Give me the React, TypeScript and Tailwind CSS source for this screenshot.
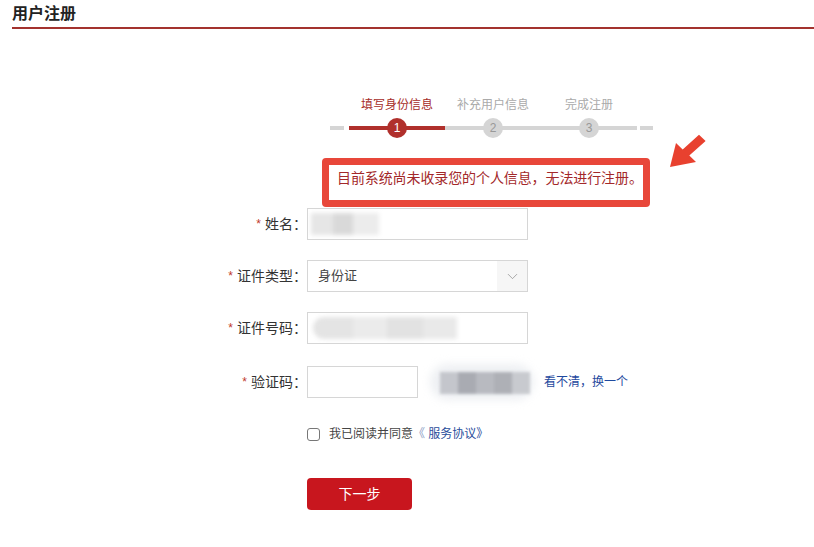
import React, { useState } from 'react';
import { ChevronDown } from 'lucide-react';

const font = { fontFamily: '"Liberation Sans", "Noto Sans CJK SC", sans-serif' };

const steps = [
  { n: 1, label: '填写身份信息', active: true },
  { n: 2, label: '补充用户信息', active: false },
  { n: 3, label: '完成注册', active: false },
];

const FieldLabel = ({ text }: { text: string }) => (
  <div className="w-[295px] shrink-0 flex items-center justify-end text-[14px] text-[#333]">
    <span className="text-[#c0392b] text-[12px] mr-[4px]">*</span>
    {text}：
  </div>
);

export default function App() {
  const [agree, setAgree] = useState(false);

  return (
    <div className="relative w-[814px] h-[547px] bg-white px-[12px] overflow-hidden" style={font}>
      {/* header */}
      <div className="pt-[4px] pb-[4px] border-b-2 border-[#a3322e] -mr-[12px]">
        <h1 className="text-[16px] leading-[19px] font-bold text-[#222]">用户注册</h1>
      </div>

      {/* stepper */}
      <div className="mt-[68px] ml-[318px] flex items-end">
        <div className="w-[14px] h-[4px] bg-[#d5d5d5] mb-[8px]" />
        <div className="ml-[5px] flex">
          {steps.map((s) => (
            <div key={s.n} className="w-[96px] flex flex-col items-center">
              <span
                className={`text-[12px] leading-[16px] ${s.active ? 'text-[#a62c28]' : 'text-[#aaa]'}`}
              >
                {s.label}
              </span>
              <div className="relative mt-[5px] h-[20px] w-full flex items-center justify-center">
                <div
                  className={`absolute inset-x-0 top-[8px] h-[4px] ${s.active ? 'bg-[#b0302c]' : 'bg-[#d5d5d5]'}`}
                />
                <div
                  className={`relative w-[20px] h-[20px] rounded-full flex items-center justify-center text-[12px] ${
                    s.active ? 'bg-[#b0302c] text-white' : 'bg-[#d5d5d5] text-[#999]'
                  }`}
                >
                  {s.n}
                </div>
              </div>
            </div>
          ))}
        </div>
        <div className="ml-[3px] w-[13px] h-[4px] bg-[#d5d5d5] mb-[8px]" />
      </div>

      {/* notice */}
      <div className="mt-[20px] ml-[310px] w-[328px] border-[7px] border-[#e8473a] rounded-[4px] bg-white pt-[3px] pb-[11px] pl-[8px]">
        <p className="text-[14px] leading-[21px] text-[#a3282a] tracking-[-0.1px] whitespace-nowrap">
          目前系统尚未收录您的个人信息，无法进行注册。
        </p>
      </div>

      {/* annotation arrow */}
      <svg className="absolute left-[664px] top-[134px]" width="46" height="36" viewBox="0 0 46 36">
        <polygon
          points="6,33 32,28 25.3,21.6 41.6,6.9 35,0.7 18.7,15.4 12,9"
          fill="#e8412f"
        />
      </svg>

      {/* form */}
      <div className="flex flex-col gap-[20px] mt-[1px]">
        <div className="flex items-center">
          <FieldLabel text="姓名" />
          <div className="relative w-[221px] h-[32px] border border-[#d6d6d6] bg-white overflow-hidden">
            <div className="absolute left-[3px] top-[4px] flex blur-[2px]">
              <div className="w-[22px] h-[22px] bg-[#e6e6e6]" />
              <div className="w-[20px] h-[22px] bg-[#d9d9d9]" />
              <div className="w-[26px] h-[22px] bg-[#ececec]" />
            </div>
          </div>
        </div>

        <div className="flex items-center">
          <FieldLabel text="证件类型" />
          <div className="w-[221px] h-[32px] border border-[#d6d6d6] bg-white flex items-center">
            <span className="flex-1 pl-[10px] text-[13px] text-[#444]">身份证</span>
            <div className="w-[30px] h-full bg-[#f6f6f6] flex items-center justify-center">
              <ChevronDown size={17} strokeWidth={1} color="#888" />
            </div>
          </div>
        </div>

        <div className="flex items-center">
          <FieldLabel text="证件号码" />
          <div className="relative w-[221px] h-[32px] border border-[#d6d6d6] bg-white overflow-hidden">
            <div className="absolute left-[5px] top-[4px] flex blur-[2px]">
              <div className="w-[40px] h-[22px] bg-[#e4e4e4] rounded-l-full" />
              <div className="w-[34px] h-[22px] bg-[#ebebeb]" />
              <div className="w-[36px] h-[22px] bg-[#e2e2e2]" />
              <div className="w-[34px] h-[22px] bg-[#e9e9e9]" />
            </div>
          </div>
        </div>

        <div className="flex items-center">
          <FieldLabel text="验证码" />
          <div className="w-[111px] h-[32px] border border-[#d6d6d6] bg-white" />
          <div className="relative ml-[12px] w-[104px] h-[36px]">
            <div className="absolute inset-0 bg-[#eef0f3] rounded-full blur-[4px]" />
            <div className="absolute left-[10px] top-[8px] flex blur-[1.5px]">
              <div className="w-[18px] h-[22px] bg-[#c4c6cc]" />
              <div className="w-[18px] h-[22px] bg-[#a9abb2]" />
              <div className="w-[18px] h-[22px] bg-[#b8bac0]" />
              <div className="w-[18px] h-[22px] bg-[#aeb0b6]" />
              <div className="w-[18px] h-[22px] bg-[#c8cacf]" />
            </div>
          </div>
          <a className="ml-[10px] text-[12px] text-[#1f4a9e] cursor-pointer">看不清，换一个</a>
        </div>
      </div>

      {/* agreement */}
      <label className="mt-[25px] ml-[295px] flex items-center h-[18px] cursor-pointer">
        <input
          type="checkbox"
          checked={agree}
          onChange={(e) => setAgree(e.target.checked)}
          className="appearance-none w-[13px] h-[13px] border border-[#777] rounded-[3px] bg-white"
        />
        <span className="ml-[9px] text-[12px] text-[#444]">我已阅读并同意</span>
        <span className="text-[12px] text-[#8a9cc4] whitespace-pre">《 </span>
        <span className="text-[12px] text-[#2a4d9b]">服务协议》</span>
      </label>

      {/* submit */}
      <button className="mt-[35px] ml-[295px] w-[105px] h-[32px] rounded-[4px] bg-[#c8161e] text-white text-[14px]">
        下一步
      </button>
    </div>
  );
}
